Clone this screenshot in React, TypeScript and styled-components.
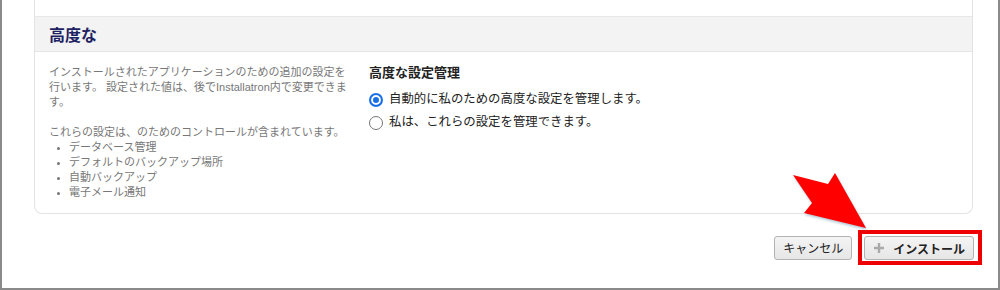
import styled, { createGlobalStyle } from 'styled-components';

const GlobalStyle = createGlobalStyle`
  html, body {
    margin: 0;
    padding: 0;
    background: #fff;
  }
  body {
    font-family: "Liberation Sans", "Noto Sans CJK JP", sans-serif;
  }
`;

const features = ['データベース管理', 'デフォルトのバックアップ場所', '自動バックアップ', '電子メール通知'];

const options = [
  { label: '自動的に私のための高度な設定を管理します。', checked: true },
  { label: '私は、これらの設定を管理できます。', checked: false },
];

const App = () => (
  <>
    <GlobalStyle />
    <Frame>
      <Card>
        <Header>
          <Title>高度な</Title>
        </Header>
        <Body>
          <Description>
            <Para>
              インストールされたアプリケーションのための追加の設定を
              <br />
              行います。 設定された値は、後でInstallatron内で変更できま
              <br />
              す。
            </Para>
            <Para>これらの設定は、のためのコントロールが含まれています。</Para>
            <FeatureList>
              {features.map(f => (
                <li key={f}>{f}</li>
              ))}
            </FeatureList>
          </Description>
          <Settings>
            <SettingLabel>高度な設定管理</SettingLabel>
            {options.map(o => (
              <Option key={o.label}>
                <Radio $checked={o.checked} />
                {o.label}
              </Option>
            ))}
          </Settings>
        </Body>
      </Card>
      <ButtonRow>
        <Button>キャンセル</Button>
        <Highlight>
          <Button $primary>
            <PlusIcon viewBox="0 0 10 10">
              <path d="M5 0v10M0 5h10" stroke="#a9a9a9" strokeWidth="2.4" />
            </PlusIcon>
            インストール
          </Button>
        </Highlight>
      </ButtonRow>
      <Arrow viewBox="0 0 90 70" width="90" height="70">
        <polygon points="8,10 27,38 19,48 81,63 50,8 43,19" fill="#ff0000" />
      </Arrow>
    </Frame>
  </>
);

export default App;

const Frame = styled.div`
  position: relative;
  width: 1000px;
  height: 290px;
  box-sizing: border-box;
  border: 2px solid #8a8a8a;
  border-top: none;
  padding: 0 25px 0 32px;
  overflow: hidden;
`;

const Card = styled.div`
  padding-top: 16px;
  border: 1px solid #e3e3e3;
  border-top: none;
  border-radius: 0 0 8px 8px;
  background: #fff;
`;

const Header = styled.div`
  height: 36px;
  box-sizing: border-box;
  display: flex;
  align-items: center;
  padding: 0 14px;
  background: #f3f3f3;
  border-top: 1px solid #e8e8e8;
  border-bottom: 1px solid #e4e4e4;
`;

const Title = styled.h3`
  margin: 0;
  font-size: 16px;
  font-weight: 700;
  color: #1d2262;
`;

const Body = styled.div`
  display: grid;
  grid-template-columns: 300px 1fr;
  column-gap: 20px;
  padding: 13px 14px 13px;
`;

const Description = styled.div`
  font-size: 11px;
  line-height: 15px;
  color: #777;
  white-space: nowrap;
`;

const Para = styled.p`
  margin: 0 0 15px;
  &:last-of-type {
    margin-bottom: 0;
  }
`;

const FeatureList = styled.ul`
  margin: 0;
  padding-left: 20px;
  list-style: disc;
  li::marker {
    font-size: 9px;
  }
`;

const Settings = styled.div`
  display: flex;
  flex-direction: column;
  color: #222;
`;

const SettingLabel = styled.div`
  font-size: 13px;
  font-weight: 700;
  line-height: 16px;
  margin-bottom: 7px;
`;

const Option = styled.label`
  display: flex;
  align-items: center;
  gap: 6px;
  font-size: 12.4px;
  line-height: 23px;
`;

const Radio = styled.span<{ $checked?: boolean }>`
  width: 14px;
  height: 14px;
  box-sizing: border-box;
  border-radius: 50%;
  flex-shrink: 0;
  border: ${p => (p.$checked ? '2px solid #1a6fe8' : '1px solid #767676')};
  background: #fff;
  box-shadow: ${p => (p.$checked ? 'inset 0 0 0 2px #fff, inset 0 0 0 6px #1a6fe8' : 'none')};
`;

const ButtonRow = styled.div`
  display: flex;
  justify-content: flex-end;
  align-items: center;
  gap: 6px;
  margin-top: 16px;
  margin-right: -9px;
`;

const Highlight = styled.div`
  border: 4px solid #ee0000;
  padding: 2px 4px 1px 2px;
`;

const Button = styled.button<{ $primary?: boolean }>`
  display: inline-flex;
  align-items: center;
  gap: 9px;
  height: 24px;
  box-sizing: border-box;
  padding: ${p => (p.$primary ? '0 8px 0 9px' : '0 8px')};
  border: 1px solid #b3b3b3;
  border-radius: 3px;
  background: linear-gradient(#f4f4f4, #e6e6e6);
  font-family: "Liberation Sans", "Noto Sans CJK JP", sans-serif;
  font-size: 12px;
  font-weight: ${p => (p.$primary ? 700 : 400)};
  color: #222;
  cursor: pointer;
`;

const PlusIcon = styled.svg`
  width: 10px;
  height: 10px;
`;

const Arrow = styled.svg`
  position: absolute;
  left: 783px;
  top: 165px;
  filter: drop-shadow(1px 2px 1px rgba(120, 160, 180, 0.55));
`;
